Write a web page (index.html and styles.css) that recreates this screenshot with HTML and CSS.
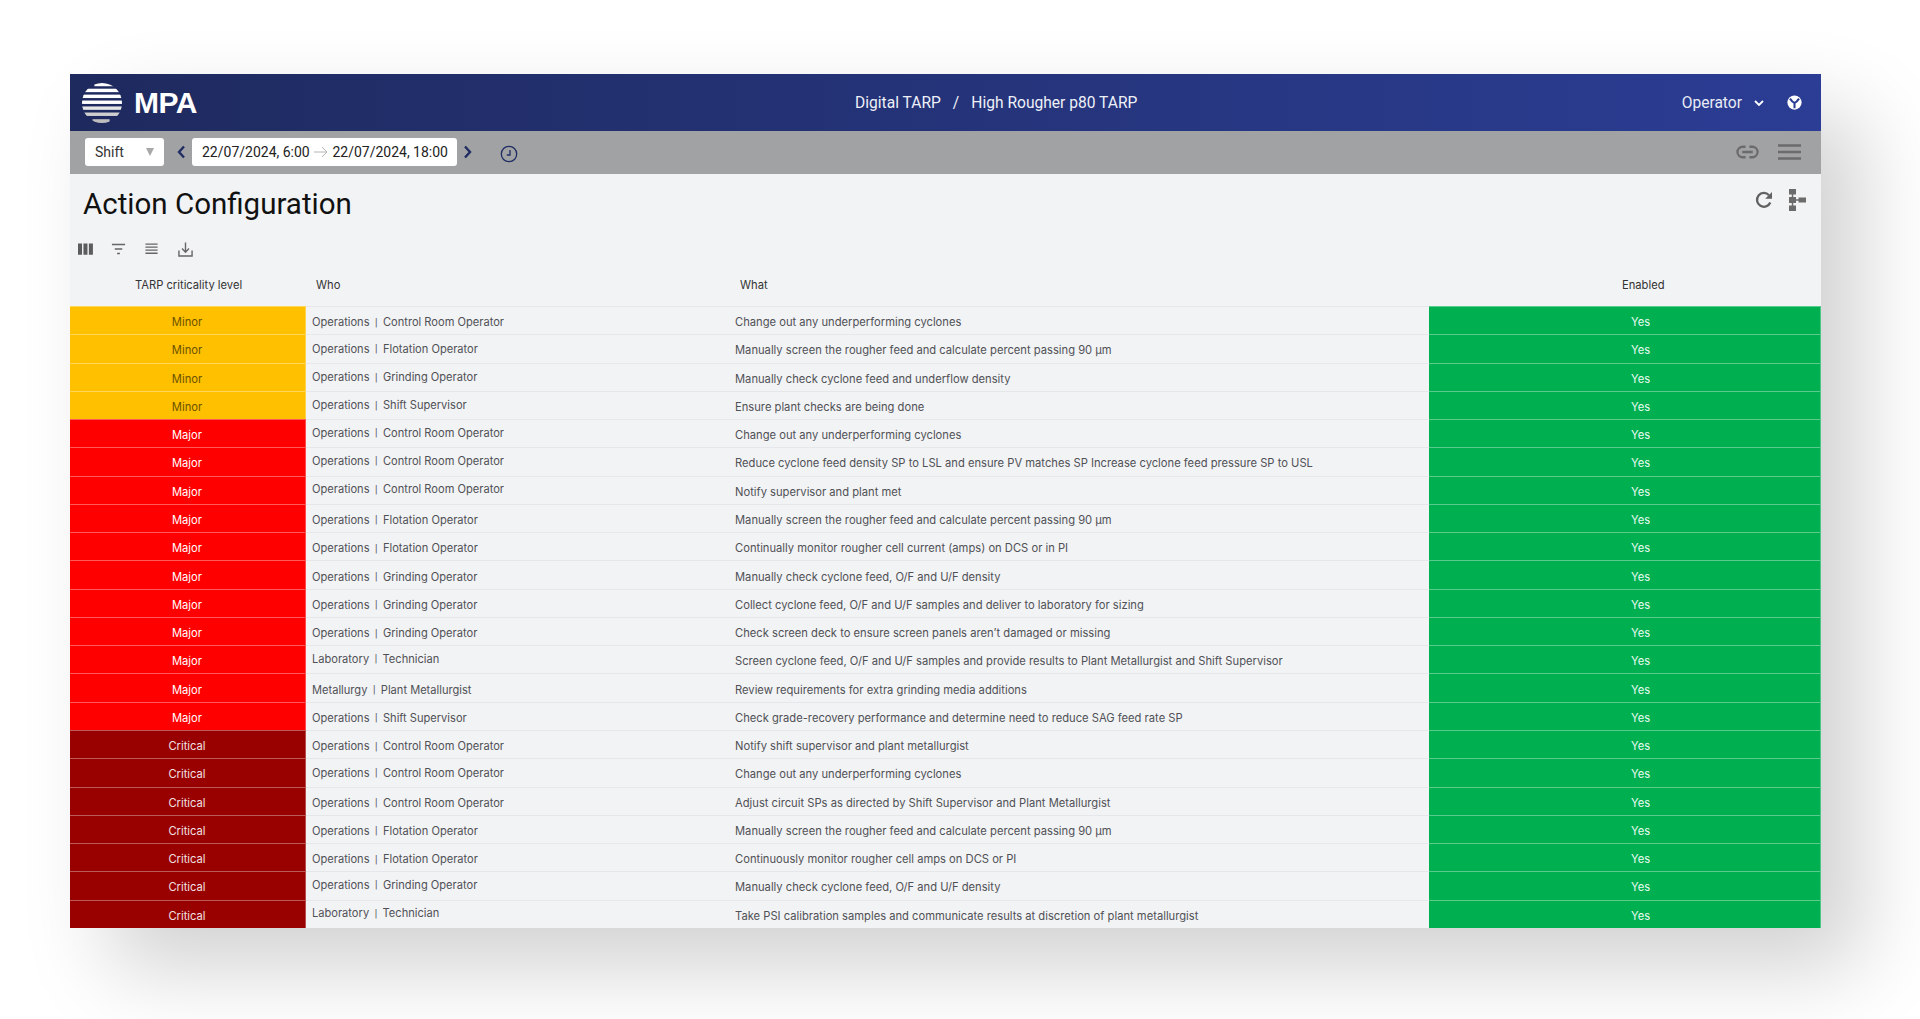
FILE: index.html
```html
<!DOCTYPE html>
<html lang="en">
<head>
<meta charset="utf-8">
<title>Action Configuration</title>
<link rel="stylesheet" href="styles.css">
</head>
<body>
<main class="window">
  <header class="topbar">
    <div class="brand">
      <svg class="logo" viewBox="0 0 42 42">
        <defs><clipPath id="globe"><circle cx="21" cy="21" r="21"/></clipPath></defs>
        <g clip-path="url(#globe)">
          <rect x="13" y="0" width="20" height="3.400" fill="#fff"/>
          <rect x="0" y="6" width="42" height="3.600" fill="#fff"/>
          <rect x="0" y="12.200" width="42" height="3.600" fill="#fff"/>
          <rect x="0" y="18.400" width="42" height="3.600" fill="#fff"/>
          <rect x="0" y="24.600" width="42" height="3.600" fill="#e6e6e6"/>
          <rect x="0" y="31" width="42" height="3.600" fill="#cfcfcf"/>
          <rect x="11" y="38" width="18" height="4" fill="#bdbdbd"/>
        </g>
      </svg>
      <span class="brand-name">MPA</span>
    </div>
    <div class="crumbs"><span>Digital TARP</span><span class="slash">/</span><span>High Rougher p80 TARP</span></div>
    <div class="user">
      <span>Operator</span>
      <svg class="chev" viewBox="0 0 12 12"><path d="M2 4l4 4 4-4" fill="none" stroke="#fff" stroke-width="1.800"/></svg>
      <svg class="world" viewBox="0 0 16 16"><circle cx="8" cy="8" r="7.600" fill="#fff"/><path d="M3.200 3.800C4.800 6.200 6.500 8 8 8.600c1.500-.6 3.200-2.400 4.800-4.800M8 8.600V14" fill="none" stroke="#2b3d94" stroke-width="2.200"/></svg>
    </div>
  </header>

  <div class="toolbar">
    <div class="select"><span>Shift</span><i class="caret"></i></div>
    <svg class="nav" viewBox="0 0 10 14"><path d="M8 1.500L3 7l5 5.500" fill="none" stroke="#1f2d63" stroke-width="2.400"/></svg>
    <div class="range"><span>22/07/2024, 6:00</span><svg class="arrow" viewBox="0 0 14 12"><path d="M0 6h12.500M8 1l5 5-5 5" fill="none" stroke="#b4b4b4" stroke-width="1"/></svg><span>22/07/2024, 18:00</span></div>
    <svg class="nav" viewBox="0 0 10 14"><path d="M2 1.500L7 7l-5 5.500" fill="none" stroke="#1f2d63" stroke-width="2.400"/></svg>
    <svg class="clock" viewBox="0 0 18 18"><circle cx="9" cy="9" r="7.700" fill="none" stroke="#1f2d63" stroke-width="1.300"/><path d="M10 5v5H6.800" fill="none" stroke="#1f2d63" stroke-width="1.300"/></svg>
    <div class="toolbar-right">
      <svg class="tool-link" viewBox="0 0 24 14"><path d="M10 1.500H7a5.500 5.500 0 0 0 0 11h3M14 1.500h3a5.500 5.500 0 0 1 0 11h-3M6.500 7h11" fill="none" stroke="#6b6b6b" stroke-width="2.400"/></svg>
      <svg class="tool-menu" viewBox="0 0 23 16"><path d="M0 1.500h23M0 8h23M0 14.500h23" fill="none" stroke="#6b6b6b" stroke-width="2.400"/></svg>
    </div>
  </div>

  <section class="content">
    <div class="title-row">
      <h1>Action Configuration</h1>
      <div class="title-actions">
        <svg class="refresh" viewBox="0 0 18 18"><path d="M15.300 11.500A6.900 6.900 0 1 1 14 4.200" fill="none" stroke="#616161" stroke-width="2.300"/><path d="M17 1v6.800h-6.800z" fill="#616161"/></svg>
        <svg class="tree" viewBox="0 0 18 22"><path d="M1 0h7v5.500H1zM1 8h7v6H1zM1 16.500h7V22H1zM10.500 8.500H18v5h-7.500z" fill="#6b6b6b"/><path d="M4.500 5v12M8 11h3" stroke="#6b6b6b" stroke-width="1.500"/></svg>
      </div>
    </div>
    <div class="grid-tools">
      <svg class="gt" viewBox="0 0 16 12"><path d="M0 0h4.300v12H0zM5.800 0h4.300v12H5.800zM11.600 0h4.300v12h-4.300z" fill="#5c5c5c"/></svg>
      <svg class="gt" viewBox="0 0 16 12"><path d="M1 1.200h14M4 6h8M6.500 10.800h3" fill="none" stroke="#666" stroke-width="1.400"/></svg>
      <svg class="gt" viewBox="0 0 16 12"><path d="M1.500 .8h13M1.500 4h13M1.500 7.200h13M1.500 10.500h13" fill="none" stroke="#666" stroke-width="1.400"/></svg>
      <svg class="gt gt-tall" viewBox="0 0 16 16"><path d="M8 .5v10M4.300 7L8 10.800 11.700 7M1 9v6h14V9" fill="none" stroke="#666" stroke-width="1.500"/></svg>
    </div>

    <div class="table" id="table">
      <div class="thead">
        <div class="th th-level">TARP criticality level</div>
        <div class="th th-who">Who</div>
        <div class="th th-what">What</div>
        <div class="th th-enabled">Enabled</div>
      </div>
      <div class="tbody">
        <div class="tr"><div class="td level minor">Minor</div><div class="td who who-flat">Operations<span class="sep">|</span>Control Room Operator</div><div class="td what">Change out any underperforming cyclones</div><div class="td yes">Yes</div></div>
        <div class="tr"><div class="td level minor">Minor</div><div class="td who">Operations<span class="sep">|</span>Flotation Operator</div><div class="td what">Manually screen the rougher feed and calculate percent passing 90 µm</div><div class="td yes">Yes</div></div>
        <div class="tr"><div class="td level minor">Minor</div><div class="td who">Operations<span class="sep">|</span>Grinding Operator</div><div class="td what">Manually check cyclone feed and underflow density</div><div class="td yes">Yes</div></div>
        <div class="tr"><div class="td level minor">Minor</div><div class="td who">Operations<span class="sep">|</span>Shift Supervisor</div><div class="td what">Ensure plant checks are being done</div><div class="td yes">Yes</div></div>
        <div class="tr"><div class="td level major">Major</div><div class="td who who-up">Operations<span class="sep">|</span>Control Room Operator</div><div class="td what">Change out any underperforming cyclones</div><div class="td yes">Yes</div></div>
        <div class="tr"><div class="td level major">Major</div><div class="td who who-up">Operations<span class="sep">|</span>Control Room Operator</div><div class="td what">Reduce cyclone feed density SP to LSL and ensure PV matches SP Increase cyclone feed pressure SP to USL</div><div class="td yes">Yes</div></div>
        <div class="tr"><div class="td level major">Major</div><div class="td who who-up">Operations<span class="sep">|</span>Control Room Operator</div><div class="td what">Notify supervisor and plant met</div><div class="td yes">Yes</div></div>
        <div class="tr"><div class="td level major">Major</div><div class="td who who-flat">Operations<span class="sep">|</span>Flotation Operator</div><div class="td what">Manually screen the rougher feed and calculate percent passing 90 µm</div><div class="td yes">Yes</div></div>
        <div class="tr"><div class="td level major">Major</div><div class="td who who-flat">Operations<span class="sep">|</span>Flotation Operator</div><div class="td what">Continually monitor rougher cell current (amps) on DCS or in PI</div><div class="td yes">Yes</div></div>
        <div class="tr"><div class="td level major">Major</div><div class="td who who-flat">Operations<span class="sep">|</span>Grinding Operator</div><div class="td what">Manually check cyclone feed, O/F and U/F density</div><div class="td yes">Yes</div></div>
        <div class="tr"><div class="td level major">Major</div><div class="td who who-flat">Operations<span class="sep">|</span>Grinding Operator</div><div class="td what">Collect cyclone feed, O/F and U/F samples and deliver to laboratory for sizing</div><div class="td yes">Yes</div></div>
        <div class="tr"><div class="td level major">Major</div><div class="td who who-flat">Operations<span class="sep">|</span>Grinding Operator</div><div class="td what">Check screen deck to ensure screen panels aren’t damaged or missing</div><div class="td yes">Yes</div></div>
        <div class="tr"><div class="td level major">Major</div><div class="td who who-up">Laboratory<span class="sep">|</span>Technician</div><div class="td what">Screen cyclone feed, O/F and U/F samples and provide results to Plant Metallurgist and Shift Supervisor</div><div class="td yes">Yes</div></div>
        <div class="tr"><div class="td level major">Major</div><div class="td who who-flat">Metallurgy<span class="sep">|</span>Plant Metallurgist</div><div class="td what">Review requirements for extra grinding media additions</div><div class="td yes">Yes</div></div>
        <div class="tr"><div class="td level major">Major</div><div class="td who who-flat">Operations<span class="sep">|</span>Shift Supervisor</div><div class="td what">Check grade-recovery performance and determine need to reduce SAG feed rate SP</div><div class="td yes">Yes</div></div>
        <div class="tr"><div class="td level critical">Critical</div><div class="td who who-flat">Operations<span class="sep">|</span>Control Room Operator</div><div class="td what">Notify shift supervisor and plant metallurgist</div><div class="td yes">Yes</div></div>
        <div class="tr"><div class="td level critical">Critical</div><div class="td who">Operations<span class="sep">|</span>Control Room Operator</div><div class="td what">Change out any underperforming cyclones</div><div class="td yes">Yes</div></div>
        <div class="tr"><div class="td level critical">Critical</div><div class="td who who-flat">Operations<span class="sep">|</span>Control Room Operator</div><div class="td what">Adjust circuit SPs as directed by Shift Supervisor and Plant Metallurgist</div><div class="td yes">Yes</div></div>
        <div class="tr"><div class="td level critical">Critical</div><div class="td who who-flat">Operations<span class="sep">|</span>Flotation Operator</div><div class="td what">Manually screen the rougher feed and calculate percent passing 90 µm</div><div class="td yes">Yes</div></div>
        <div class="tr"><div class="td level critical">Critical</div><div class="td who who-flat">Operations<span class="sep">|</span>Flotation Operator</div><div class="td what">Continuously monitor rougher cell amps on DCS or PI</div><div class="td yes">Yes</div></div>
        <div class="tr"><div class="td level critical">Critical</div><div class="td who who-up">Operations<span class="sep">|</span>Grinding Operator</div><div class="td what">Manually check cyclone feed, O/F and U/F density</div><div class="td yes">Yes</div></div>
        <div class="tr"><div class="td level critical">Critical</div><div class="td who who-up">Laboratory<span class="sep">|</span>Technician</div><div class="td what">Take PSI calibration samples and communicate results at discretion of plant metallurgist</div><div class="td yes">Yes</div></div>
      </div>
    </div>
  </section>
</main>
</body>
</html>
```
FILE: styles.css
```css
* { box-sizing: border-box; }
html, body { margin: 0; height: 100%; background: #fff; overflow: hidden; }
body { padding: 74px 99px 91px 70px; font-family: Roboto, "Liberation Sans", sans-serif; }
.window { height: 854px; display: flex; flex-direction: column; background: #f2f3f5; box-shadow: 40px 40px 80px rgba(0,0,0,.18); }

.topbar { height: 57px; flex: none; display: grid; grid-template-columns: 773px auto 1fr; align-items: center; padding: 0 19px 0 12px; background: linear-gradient(90deg, #1e2a5e 0%, #2b3d94 100%); color: #fff; }
.brand { display: flex; align-items: center; gap: 12px; }
.logo { width: 40px; height: 40px; display: block; }
.brand-name { font: 700 30px/1 "Liberation Sans", Arial, sans-serif; letter-spacing: -.5px; }
.crumbs { display: flex; gap: 12px; font-size: 15.6px; color: #eef0f8; }
.user { justify-self: end; display: flex; align-items: center; font-size: 15.6px; color: #e8ebf6; }
.chev { width: 12px; height: 12px; margin-left: 11px; }
.world { width: 15px; height: 15px; margin-left: 22px; }

.toolbar { height: 43px; flex: none; display: flex; align-items: center; padding: 0 20px 2px 15px; background: #a1a2a4; }
.select { width: 79px; height: 28px; margin-right: 12px; padding: 0 10px; display: flex; align-items: center; justify-content: space-between; background: #fff; border-radius: 3px; font-size: 14px; color: #333; }
.caret { width: 0; height: 0; border-left: 4px solid transparent; border-right: 4px solid transparent; border-top: 8px solid #a8a8a8; }
.nav { width: 10px; height: 14px; }
.range { width: 265px; height: 28px; margin: 0 6px; padding: 0 9px 0 10px; display: flex; align-items: center; justify-content: space-between; background: #fff; border-radius: 3px; font-size: 14px; color: #222; }
.arrow { width: 14px; height: 12px; margin-top: 1px; }
.clock { width: 18px; height: 18px; margin-left: 27px; margin-top: 4px; }
.toolbar-right { margin-left: auto; display: flex; align-items: center; gap: 19px; }
.tool-link { width: 23px; height: 14px; }
.tool-menu { width: 23px; height: 16px; }

.content { flex: 1; min-height: 0; display: flex; flex-direction: column; }
.title-row { height: 54px; flex: none; display: flex; justify-content: space-between; padding: 0 15px 0 13px; }
h1 { margin: 12px 0 0; font-weight: 400; font-size: 29.500px; line-height: 36px; color: #111; }
.title-actions { display: flex; align-items: flex-start; gap: 15px; padding-top: 17px; }
.refresh { width: 18px; height: 18px; }
.tree { width: 18px; height: 22px; margin-top: -2px; }
.grid-tools { height: 24px; flex: none; margin-top: 9px; display: flex; align-items: center; gap: 18px; padding-left: 8px; }
.gt { width: 15px; height: 12px; display: block; }
.gt-tall { height: 15px; margin-left: 1px; }

.table { flex: 1; min-height: 0; display: flex; flex-direction: column; }
.thead { height: 45px; flex: none; display: grid; grid-template-columns: 236px 424px 699px 1fr; align-items: center; font-family: Inter, sans-serif; font-size: 11.200px; color: #333; }
.th-level { padding-left: 65px; }
.th-who { padding-left: 10px; }
.th-what { padding-left: 10px; }
.th-enabled { padding-left: 193px; }
.th { margin-top: 2px; }
.tbody { flex: 1; min-height: 0; display: flex; flex-direction: column; }
.tr { flex: 1; min-height: 0; display: grid; grid-template-columns: 236px 424px 699px 1fr; }
.td { display: flex; align-items: center; padding-top: 3px; font-family: Inter, sans-serif; font-size: 11.200px; border-top: 1px solid #e6e7ea; color: #505156; }
.who { padding: 0 0 0 6px; font-size: 11.100px; }
.who-flat { padding-top: 3px; }
.who-up { padding-bottom: 2px; }
.sep { margin: 0 5.500px; font-family: Roboto, sans-serif; font-size: 10px; }
.what { padding-left: 5px; }
.level { justify-content: center; padding-right: 1px; border-right: 1px solid rgba(255,255,255,.3); border-top-color: rgba(255,255,255,.35); }
.yes { justify-content: center; padding-left: 32px; border-right: 1px solid rgba(255,255,255,.3); border-top-color: rgba(255,255,255,.35); }
.minor { background: #ffc000; color: #6a5200; }
.major { background: #ff0000; color: #fff; }
.critical { background: #990000; color: #f0e0e0; }
.yes { background: #00b050; color: #eafaf0; }
```
